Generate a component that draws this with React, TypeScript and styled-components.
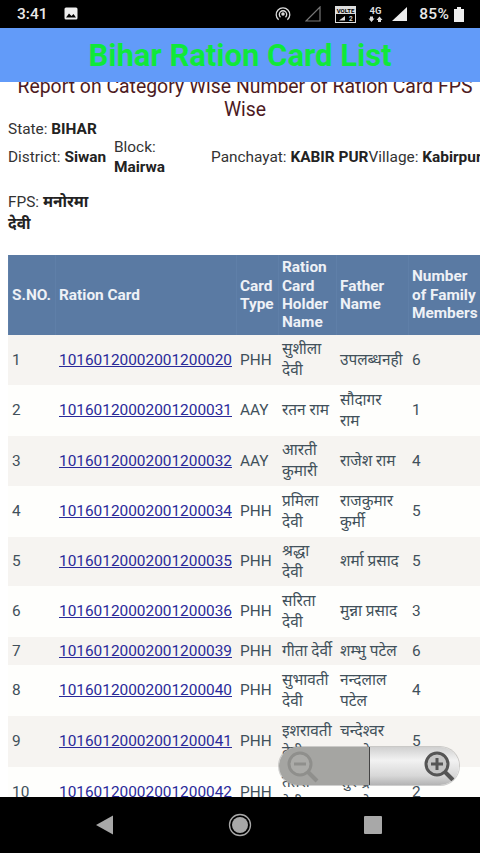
import React from "react";
import styled, { createGlobalStyle } from "styled-components";

const Global = createGlobalStyle`
  html, body { margin: 0; padding: 0; background: #000; }
  body { font-family: Roboto, "Noto Sans", "Liberation Sans", sans-serif; }
`;

const Phone = styled.div`
  width: 480px; height: 853px; display: flex; flex-direction: column;
  overflow: hidden; position: relative; background: #fff;
`;
const StatusBar = styled.div`
  height: 28px; background: #000; color: #e8e8e8; display: flex; align-items: center;
  padding: 0 16px 0 17px; font-size: 15.5px; flex: none; box-sizing: border-box;
`;
const Time = styled.span` margin-right: 16px; font-weight: 500; `;
const StatusRight = styled.div` margin-left: auto; display: flex; align-items: center; `;
const Percent = styled.span` margin: 0 5px 0 11px; font-weight: 500; letter-spacing: .2px; `;
const StatusLabel = styled.text` font-family: Roboto, sans-serif; font-weight: 700; `;
const Header = styled.div`
  height: 54px; flex: none; background: #629bf9; display: flex; align-items: center; justify-content: center;
  color: #10e83a; font-size: 31px; font-weight: 700; position: relative; z-index: 2; padding-top: 1px; box-sizing: border-box;
`;
const Content = styled.div` flex: 1; overflow: hidden; position: relative; background: #fff; `;
const Report = styled.h2`
  margin: -7px 0 0; font-weight: 400; font-size: 19.4px; line-height: 23px; text-align: center;
  color: #4d1a22; padding: 0 0 0 10px;
`;
const Info = styled.div`
  color: #333; font-size: 15.4px; line-height: 20px; padding: 0 8px; margin-top: -1px;
  b { font-weight: 700; color: #222; }
`;
const StateLine = styled.div` line-height: 18px; margin-bottom: -1px; white-space: nowrap; `;
const InfoLine = styled.div` display: flex; align-items: center; white-space: nowrap; `;
const Cell = styled.div<{ $w?: number }>`
  flex: ${(p) => (p.$w ? `0 0 ${p.$w}px` : "none")};
  white-space: ${(p) => (p.$w ? "normal" : "nowrap")};
`;
const FpsLine = styled.div` width: 100px; margin-top: 14px; line-height: 22px; `;
const Table = styled.table`
  border-collapse: collapse; table-layout: fixed; width: 475px; margin: 20px 0 0 8px;
  font-size: 15.4px; line-height: 21px; color: #41505a;
`;
const Th = styled.th`
  background: #5a7aa3; color: #eef1f6; font-weight: 700; text-align: left; line-height: 18.4px;
  padding: 0 4px; height: 80px; box-sizing: border-box; vertical-align: middle;
  box-shadow: inset 1px 0 0 #5f7fa8;
`;
const Row = styled.tr<{ $alt: boolean; $h: number }>`
  background: ${(p) => (p.$alt ? "#f6f4f1" : "#fefefc")};
  height: ${(p) => p.$h}px;
`;
const Td = styled.td`
  padding: 0 4px; vertical-align: middle; overflow: hidden;
`;
const CardLink = styled.a`
  color: #2a2a9a; text-decoration: underline; white-space: nowrap;
`;
const Zoom = styled.div`
  position: absolute; left: 279px; top: 665px; width: 180px; height: 38px; border-radius: 19px;
  background: linear-gradient(#d0d0d0, #f2f2f2 35%, #d8d8d8 75%, #b4b4b4);
  box-shadow: 0 0 0 1px rgba(120,120,120,.35); overflow: hidden; z-index: 3;
  display: flex; align-items: center; justify-content: space-between; padding: 0 2px 0 5px; box-sizing: border-box;
`;
const ZoomPressed = styled.div`
  position: absolute; left: 0; top: 0; bottom: 0; width: 90px; background: #a5a5a2;
  border-right: 1px solid #444;
`;
const ZoomIcon = styled.svg` position: relative; width: 36px; height: 36px; `;
const NavBar = styled.div`
  height: 56px; flex: none; background: #000; display: grid; grid-template-columns: 210px 60px 206px;
  align-items: center; justify-items: center;
`;
const NavSlot = styled.div` display: flex; justify-content: center; `;

const rows: [string, string, string, React.ReactNode, React.ReactNode, string, number][] = [
  ["1", "10160120002001200020", "PHH", <>सुशीला<br />देवी</>, "उपलब्धनही", "6", 50],
  ["2", "10160120002001200031", "AAY", "रतन राम", <>सौदागर<br />राम</>, "1", 51],
  ["3", "10160120002001200032", "AAY", <>आरती<br />कुमारी</>, "राजेश राम", "4", 50],
  ["4", "10160120002001200034", "PHH", <>प्रमिला<br />देवी</>, <>राजकुमार<br />कुर्मी</>, "5", 51],
  ["5", "10160120002001200035", "PHH", <>श्रद्धा<br />देवी</>, "शर्मा प्रसाद", "5", 49],
  ["6", "10160120002001200036", "PHH", <>सरिता<br />देवी</>, "मुन्ना प्रसाद", "3", 51],
  ["7", "10160120002001200039", "PHH", "गीता देर्वी", "शम्भु पटेल", "6", 28],
  ["8", "10160120002001200040", "PHH", <>सुभावती<br />देवी</>, <>नन्दलाल<br />पटेल</>, "4", 51],
  ["9", "10160120002001200041", "PHH", <>इशरावती<br />देवी</>, <>चन्देश्वर<br />महतो</>, "5", 51],
  ["10", "10160120002001200042", "PHH", <>तेतरी<br />देवी</>, <>सुरेन्द्र<br />महतो</>, "2", 51],
];

export default function App() {
  return (
    <Phone>
      <Global />
      <StatusBar>
        <Time>3:41</Time>
        <svg width="14" height="14" viewBox="0 0 14 14">
          <rect x="0.5" y="0.5" width="13" height="12" rx="1.5" fill="#eee" />
          <path d="M2 10.5 L5 6.5 L7.5 9 L9.5 7 L12 10.5Z" fill="#000" />
        </svg>
        <StatusRight>
          <svg width="16" height="16" viewBox="0 0 16 16" fill="none" stroke="#ddd" strokeWidth="1.3">
            <path d="M3.6 13.8A6.8 6.8 0 1 1 12.4 13.8" />
            <path d="M5.5 11.2A3.7 3.7 0 1 1 10.5 11.2" />
            <circle cx="8" cy="8" r="1.1" fill="#ddd" />
          </svg>
          <svg width="16" height="16" viewBox="0 0 16 16" fill="none" stroke="#777" strokeWidth="1.2" style={{ marginLeft: 14 }}>
            <path d="M1 15 L15 1 V15Z" />
          </svg>
          <svg width="21" height="17" viewBox="0 0 21 17" style={{ marginLeft: 14 }}>
            <rect x="0.5" y="0.5" width="20" height="16" fill="#000" stroke="#ddd" />
            <rect x="0" y="0" width="21" height="8" fill="#ddd" />
            <StatusLabel x="10.5" y="6.5" fontSize="6" textAnchor="middle" fill="#000">VOLTE</StatusLabel>
            <path d="M4 14.5 L10 10 V14.5Z" fill="#ddd" />
            <StatusLabel x="14" y="15" fontSize="6.5" fill="#ddd">2</StatusLabel>
          </svg>
          <svg width="15" height="18" viewBox="0 0 15 18" style={{ marginLeft: 12 }} fill="#ddd">
            <StatusLabel x="7.5" y="8.5" fontSize="9.5" textAnchor="middle" fill="#ddd">4G</StatusLabel>
            <path d="M2 11.5H5V13.5H6.5L3.5 17L0.5 13.5H2Z" />
            <path d="M10 17H13V15H14.5L11.5 11.5L8.5 15H10Z" />
          </svg>
          <svg width="17" height="16" viewBox="0 0 17 16" style={{ marginLeft: 8 }}>
            <path d="M1 15 L16 1 V15Z" fill="#eee" />
          </svg>
          <Percent>85%</Percent>
          <svg width="10" height="15" viewBox="0 0 10 15">
            <rect x="3" y="0" width="4" height="2" fill="#eee" />
            <rect x="0" y="2" width="10" height="13" fill="#eee" />
          </svg>
        </StatusRight>
      </StatusBar>
      <Header>Bihar Ration Card List</Header>
      <Content>
        <Report>Report on Category Wise Number of Ration Card FPS Wise</Report>
        <Info>
          <StateLine>State: <b>BIHAR</b></StateLine>
          <InfoLine>
            <Cell $w={106}>District: <b>Siwan</b></Cell>
            <Cell $w={97}>Block:<br /><b>Mairwa</b></Cell>
            <Cell>Panchayat: <b>KABIR PUR</b>Village: <b>Kabirpur</b></Cell>
          </InfoLine>
          <FpsLine>FPS: <b>मनोरमा देवी</b></FpsLine>
        </Info>
        <Table>
          <colgroup>
            <col width="47" /><col width="181" /><col width="42" /><col width="58" /><col width="72" /><col width="75" />
          </colgroup>
          <thead>
            <tr>
              <Th>S.NO.</Th><Th>Ration Card</Th><Th>Card Type</Th><Th>Ration Card Holder Name</Th><Th>Father Name</Th><Th>Number of Family Members</Th>
            </tr>
          </thead>
          <tbody>
            {rows.map((r, i) => (
              <Row key={r[0]} $alt={i % 2 === 0} $h={r[6]}>
                <Td>{r[0]}</Td>
                <Td><CardLink>{r[1]}</CardLink></Td>
                <Td>{r[2]}</Td>
                <Td>{r[3]}</Td>
                <Td>{r[4]}</Td>
                <Td>{r[5]}</Td>
              </Row>
            ))}
          </tbody>
        </Table>
        <Zoom>
          <ZoomPressed />
          <ZoomIcon viewBox="0 0 36 36" fill="none" stroke="#8f8f8c" strokeWidth="3">
            <circle cx="16" cy="16" r="11" fill="#ababa8" />
            <path d="M10 16H22" />
            <path d="M24 24L33 33" strokeWidth="4" />
          </ZoomIcon>
          <ZoomIcon viewBox="0 0 36 36" fill="none" stroke="#555" strokeWidth="3">
            <circle cx="16" cy="16" r="11" fill="#c4c4c4" />
            <path d="M10 16H22M16 10V22" />
            <path d="M24 24L33 33" strokeWidth="4" />
          </ZoomIcon>
        </Zoom>
      </Content>
      <NavBar>
        <NavSlot>
          <svg width="20" height="20" viewBox="0 0 20 20"><path d="M18 0.5V19.5L1 10Z" fill="#a8a8a8" /></svg>
        </NavSlot>
        <NavSlot>
          <svg width="24" height="24" viewBox="0 0 24 24"><circle cx="12" cy="12" r="10.5" fill="none" stroke="#a8a8a8" strokeWidth="1.3" /><circle cx="12" cy="12" r="8" fill="#a8a8a8" /></svg>
        </NavSlot>
        <NavSlot>
          <svg width="18" height="18" viewBox="0 0 18 18"><rect width="18" height="18" rx="1" fill="#a8a8a8" /></svg>
        </NavSlot>
      </NavBar>
    </Phone>
  );
}
